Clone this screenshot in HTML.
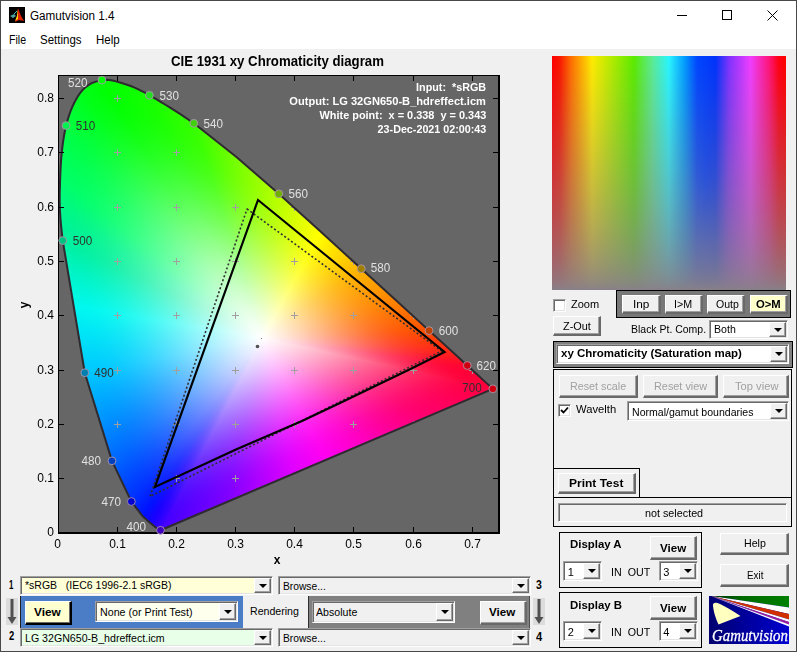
<!DOCTYPE html>
<html><head><meta charset="utf-8">
<style>
*{box-sizing:border-box;margin:0;padding:0}
html,body{width:797px;height:652px;overflow:hidden;background:#f0f0f0;font-family:"Liberation Sans",sans-serif;font-size:11px;color:#000}
#win{position:absolute;left:0;top:0;width:797px;height:652px;border:1px solid #5c5c5c;background:#f0f0f0;overflow:hidden}
.abs{position:absolute}
#titlebar{position:absolute;left:0;top:0;width:795px;height:30px;background:#fff}
#menubar{position:absolute;left:0;top:30px;width:795px;height:18px;background:#fff}
.t{position:absolute;white-space:nowrap;line-height:1}
canvas{position:absolute}
.btn{position:absolute;background:#f0f0f0;border-style:solid;border-width:1px 2px 2px 1px;border-color:#fff #696969 #696969 #fff;box-shadow:inset -1px -1px #a0a0a0;text-align:center;white-space:nowrap;font-size:12px;line-height:1}
.btn span{position:absolute;left:0;right:0}
.dd{position:absolute;background:#fff;border-style:solid;border-width:1px 1px 1px 1px;border-color:#a0a0a0 #fff #fff #a0a0a0;box-shadow:inset 1px 1px #696969,inset -1px -1px #e3e3e3;white-space:nowrap;font-size:12px;line-height:1;overflow:hidden}
.dd .v{position:absolute;left:4px}
.arr{position:absolute;top:1px;right:1px;bottom:1px;width:17px;background:#f0f0f0;border-style:solid;border-width:1px 1px 1px 1px;border-color:#fff #696969 #696969 #fff;box-shadow:inset -1px -1px #a0a0a0}
.arr:after{content:"";position:absolute;left:50%;top:50%;margin-left:-4px;margin-top:-2px;border-left:4px solid transparent;border-right:4px solid transparent;border-top:4px solid #000}
.frame{position:absolute;border:1px solid #000}
.chk{position:absolute;width:13px;height:13px;background:#fff;border:1px solid;border-color:#a0a0a0 #fff #fff #a0a0a0;box-shadow:inset 1px 1px #696969,inset -1px -1px #e3e3e3}
.tx{position:absolute;white-space:pre;line-height:1;transform-origin:0 0}
.lbl{position:absolute;white-space:nowrap;font-size:12px;line-height:1}
.b{font-weight:bold}

</style></head><body>
<div id="win">
 <div id="titlebar"></div>
 <div id="menubar"></div>
</div>
<canvas id="plot" width="560" height="520" style="left:0;top:50px"></canvas>
<canvas id="hue" width="234" height="234" style="left:552px;top:56px"></canvas>

<div id="ui">
 <svg class="abs" style="left:9px;top:7px" width="16" height="16" viewBox="0 0 16 16"><rect width="16" height="16" fill="#000"/><path d="M9 1L12 9L15 14L10 13L6 15L8 9Z" fill="#e02000"/><path d="M9 2L8 9L6 14L9 12Z" fill="#ffd000"/><path d="M1 9L5 7L7 9L4 11Z" fill="#50a0a0"/><path d="M5 7L8 4" stroke="#40c0c0" stroke-width="1"/></svg>
 <div class="abs" style="left:677px;top:15px;width:10px;height:1px;background:#000"></div>
 <div class="abs" style="left:722px;top:10px;width:10px;height:10px;border:1px solid #000"></div>
 <svg class="abs" style="left:767px;top:10px" width="11" height="11"><path d="M0.5 0.5L10.5 10.5M10.5 0.5L0.5 10.5" stroke="#000" stroke-width="1"/></svg>

 <!-- right panel -->
 <div class="chk" style="left:553px;top:299px"></div>
 <div class="btn" style="left:553px;top:316px;width:48px;height:20px"></div>
 <div class="abs" style="left:616px;top:290px;width:175px;height:28px;background:#787878;border:1px solid #000"></div>
 <div class="btn" style="left:622px;top:295px;width:39px;height:19px"></div>
 <div class="btn" style="left:665px;top:295px;width:38px;height:19px"></div>
 <div class="btn" style="left:707px;top:295px;width:38px;height:19px"></div>
 <div class="btn" style="left:750px;top:295px;width:38px;height:19px;background:#ffffcc"></div>
 <div class="dd" style="left:709px;top:320px;width:79px;height:19px"><div class="arr"></div></div>
 <div class="abs" style="left:553px;top:341px;width:240px;height:27px;background:#808080;border:1px solid #000"></div>
 <div class="dd" style="left:556px;top:344px;width:233px;height:20px"><div class="arr"></div></div>
 <div class="frame" style="left:553px;top:369px;width:239px;height:129px"></div>
 <div class="btn" style="left:559px;top:375px;width:79px;height:23px"></div>
 <div class="btn" style="left:643px;top:375px;width:75px;height:23px"></div>
 <div class="btn" style="left:723px;top:375px;width:66px;height:23px"></div>
 <div class="chk" style="left:558px;top:404px"></div>
 <svg class="abs" style="left:560px;top:406px" width="9" height="9"><path d="M1 4L3.5 6.5L8 1.5" stroke="#000" stroke-width="1.8" fill="none"/></svg>
 <div class="dd" style="left:627px;top:401px;width:162px;height:20px"><div class="arr"></div></div>
 <div class="frame" style="left:553px;top:468px;width:87px;height:30px"></div>
 <div class="btn" style="left:558px;top:473px;width:78px;height:21px"></div>
 <div class="frame" style="left:553px;top:497px;width:239px;height:30px"></div>
 <div class="abs" style="left:558px;top:503px;width:229px;height:19px;border:1px solid;border-color:#a0a0a0 #fff #fff #a0a0a0;box-shadow:inset 1px 1px #696969"></div>

 <div class="frame" style="left:559px;top:532px;width:143px;height:56px"></div>
 <div class="btn" style="left:650px;top:536px;width:47px;height:24px"></div>
 <div class="dd" style="left:563px;top:561px;width:39px;height:20px"><div class="arr"></div></div>
 <div class="dd" style="left:659px;top:561px;width:39px;height:20px"><div class="arr"></div></div>
 <div class="frame" style="left:559px;top:592px;width:143px;height:56px"></div>
 <div class="btn" style="left:650px;top:596px;width:47px;height:24px"></div>
 <div class="dd" style="left:563px;top:621px;width:39px;height:20px"><div class="arr"></div></div>
 <div class="dd" style="left:659px;top:621px;width:39px;height:20px"><div class="arr"></div></div>
 <div class="btn" style="left:720px;top:533px;width:69px;height:22px"></div>
 <div class="btn" style="left:720px;top:564px;width:69px;height:23px"></div>
 <svg class="abs" style="left:709px;top:596px" width="80" height="48" viewBox="0 0 80 48">
  <defs><linearGradient id="lg1" x1="0" y1="0" x2="1" y2="0"><stop offset="0" stop-color="#000070"/><stop offset="1" stop-color="#0000d0"/></linearGradient>
  <linearGradient id="lg2" x1="0" y1="0" x2="1" y2="0"><stop offset="0" stop-color="#003000"/><stop offset="0.4" stop-color="#006a00"/><stop offset="1" stop-color="#008000"/></linearGradient></defs>
  <rect width="80" height="48" fill="url(#lg1)"/>
  <path d="M2 0L80 0L80 11.5Z" fill="url(#lg2)"/>
  <path d="M2 0L80 11.5L80 18Z" fill="#fff"/>
  <path d="M2 0L80 18L80 23.5Z" fill="#d03000"/>
  <path d="M2 0L80 23.5L80 26Z" fill="#fff"/>
  <path d="M2 0L80 26L80 28.5Z" fill="#a020a0"/>
  <path d="M2 0L80 28.5L80 30.5Z" fill="#fff"/>
  <path d="M4 10Q3.5 6.5 7.5 6.8Q13 8 31.5 20L9.5 28.5Q5 19 4 10Z" fill="#ffffc0"/>
  <text x="3" y="44.5" textLength="76" lengthAdjust="spacingAndGlyphs" font-family="Liberation Serif" font-style="italic" font-size="17.5" fill="#fff" stroke="#fff" stroke-width="0.3">Gamutvision</text>
 </svg>

 <!-- bottom controls -->
 <div class="dd" style="left:20px;top:576px;width:253px;height:19px;background:#ffffd8"><div class="arr"></div></div>
 <div class="abs" style="left:6px;top:598px;width:12px;height:27px;background:#dcdcdc"></div>
 <svg class="abs" style="left:6px;top:598px" width="12" height="27"><rect x="4.5" y="1" width="3" height="20" fill="#505050"/><path d="M1.5 19L10.5 19L6 26Z" fill="#505050"/></svg>
 <div class="abs" style="left:20px;top:596px;width:223px;height:32px;background:#4b7cc6;border-left:1px solid #202020"></div>
 <div class="btn" style="left:25px;top:601px;width:47px;height:24px;background:#ffffd0;border-color:#fff #000 #000 #fff;box-shadow:inset -1px -1px #696969"></div>
 <div class="dd" style="left:95px;top:601px;width:143px;height:21px;background:#ffffee"><div class="arr"></div></div>
 <div class="abs" style="left:308px;top:596px;width:222px;height:32px;background:#808080;border-left:1px solid #303030;border-right:1px solid #505050"></div>
 <div class="dd" style="left:312px;top:601px;width:143px;height:22px;background:#f0f0f0"><div class="arr"></div></div>
 <div class="btn" style="left:480px;top:601px;width:47px;height:24px"></div>
 <div class="abs" style="left:533px;top:598px;width:12px;height:27px;background:#dcdcdc"></div>
 <svg class="abs" style="left:533px;top:598px" width="12" height="27"><rect x="4.5" y="1" width="3" height="20" fill="#505050"/><path d="M1.5 19L10.5 19L6 26Z" fill="#505050"/></svg>
 <div class="dd" style="left:20px;top:628px;width:253px;height:19px;background:#e8ffe8"><div class="arr"></div></div>
 <div class="dd" style="left:278px;top:576px;width:253px;height:19px;background:#f0f0f0"><div class="arr"></div></div>
 <div class="dd" style="left:278px;top:628px;width:253px;height:19px;background:#f0f0f0"><div class="arr"></div></div>
 <div id="texts"></div>
</div>
<script>
(function(){
var L=[[380,.1741,.0050],[385,.1740,.0050],[390,.1738,.0049],[395,.1736,.0049],[400,.1733,.0048],[405,.1730,.0048],[410,.1726,.0048],[415,.1721,.0048],[420,.1714,.0051],[425,.1703,.0058],[430,.1689,.0069],[435,.1669,.0086],[440,.1644,.0109],[445,.1611,.0138],[450,.1566,.0177],[455,.1510,.0227],[460,.1440,.0297],[465,.1355,.0399],[470,.1241,.0578],[475,.1096,.0868],[480,.0913,.1327],[485,.0687,.2007],[490,.0454,.2950],[495,.0235,.4127],[500,.0082,.5384],[505,.0039,.6548],[510,.0139,.7502],[515,.0389,.8120],[520,.0743,.8338],[525,.1142,.8262],[530,.1547,.8059],[535,.1929,.7816],[540,.2296,.7543],[545,.2658,.7243],[550,.3016,.6923],[555,.3373,.6589],[560,.3731,.6245],[565,.4087,.5896],[570,.4441,.5547],[575,.4788,.5202],[580,.5125,.4866],[585,.5448,.4544],[590,.5752,.4242],[595,.6029,.3965],[600,.6270,.3725],[605,.6482,.3514],[610,.6658,.3340],[615,.6801,.3197],[620,.6915,.3083],[625,.7006,.2993],[630,.7079,.2920],[635,.7140,.2859],[640,.7190,.2809],[645,.7230,.2770],[650,.7260,.2740],[655,.7283,.2717],[660,.7300,.2700],[665,.7311,.2689],[670,.7320,.2680],[675,.7327,.2673],[680,.7334,.2666],[685,.7340,.2660],[690,.7344,.2656],[695,.7346,.2654],[700,.7347,.2653]];
var OY=50;var WR=window.WRr||1,WG=window.WGr||1,WB=window.WBr||1;
function PX(x){return 57.9+x*592;}
function PY(y){return 532.9-y*543-OY;}
var c=document.getElementById('plot'),g=c.getContext('2d');
var W=c.width,H=c.height;
g.fillStyle='#f0f0f0';g.fillRect(0,0,W,H);
g.fillStyle='#666666';g.fillRect(58,75-OY,441,458);
// locus polyline
var WLS=[400,410,420,430,440,450,460,470,480,490,500,505,510,515,520,525,530,540,550,560,570,580,590,600,610,620,630,640,650,660,670,680,690,700];
var S0=[];WLS.forEach(function(wl){var p=L[(wl-380)/5];S0.push([PX(p[1]),PY(p[2]),wl]);});
var S=[];
for(var i=0;i<S0.length;i++){var p1=S0[i];
 if(i<S0.length-1&&p1[2]>=500&&p1[2]<540){var p0=S0[Math.max(0,i-1)],p2=S0[i+1],p3=S0[Math.min(S0.length-1,i+2)];
  for(var t=0;t<1;t+=0.1){var t2=t*t,t3=t2*t;
   S.push([0.5*((2*p1[0])+(-p0[0]+p2[0])*t+(2*p0[0]-5*p1[0]+4*p2[0]-p3[0])*t2+(-p0[0]+3*p1[0]-3*p2[0]+p3[0])*t3),
          0.5*((2*p1[1])+(-p0[1]+p2[1])*t+(2*p0[1]-5*p1[1]+4*p2[1]-p3[1])*t2+(-p0[1]+3*p1[1]-3*p2[1]+p3[1])*t3),p1[2]+t*(p2[2]-p1[2])]);}}
 else S.push(p1);}
function pathS(ctx){ctx.beginPath();for(var i=0;i<S.length;i++){if(i==0)ctx.moveTo(S[i][0],S[i][1]);else ctx.lineTo(S[i][0],S[i][1]);}ctx.closePath();}
var img=g.getImageData(0,0,W,H),d=img.data;
var off=document.createElement('canvas');off.width=W;off.height=H;var og=off.getContext('2d');
pathS(og);og.fillStyle='#000';og.fill();
var m=og.getImageData(0,0,W,H).data;
function gam(v){v=v<0?0:v;var GP=window.GAMP===undefined?1.4:window.GAMP;if(GP)return Math.pow(v,1/GP);return v<=0.0031308?12.92*v:1.055*Math.pow(v,1/2.4)-0.055;}
function colXY(x,y){if(y<=0.001)y=0.001;var X=x/y,Y=1,Z=(1-x-y)/y;
 var r=3.1338561*X-1.6168667*Y-0.4906146*Z,gg=-0.9787684*X+1.9161415*Y+0.0334540*Z,b=0.0719453*X-0.2289914*Y+1.4052427*Z;
 if(window.D65){r=3.2406*X-1.5372*Y-0.4986*Z;gg=-0.9689*X+1.8758*Y+0.0415*Z;b=0.0557*X-0.2040*Y+1.0570*Z;}
 if(r<0)r=0;if(gg<0)gg=0;if(b<0)b=0;var mx=Math.max(r,gg,b);return [255*gam(r/mx),255*gam(gg/mx),255*gam(b/mx)];}
function colPX(px,py){return colXY((px-57.9)/592,(532.9-(py+OY))/543);}
var MESH=window.MESH===undefined?2:window.MESH;
// mesh boundary vertices: locus + purple line samples
var BV=[];for(var i=0;i<S.length;i++){var p=S[i];BV.push([p[0],p[1],p[2]]);if(i<S.length-1){var p2=S[i+1];if(p2[2]-p[2]>=4.9){for(var q=1;q<4;q++){var t=q/4;BV.push([p[0]+(p2[0]-p[0])*t,p[1]+(p2[1]-p[1])*t,p[2]+(p2[2]-p[2])*t]);}}}}
var A0=BV[BV.length-1],A1=BV[0];for(var q=1;q<10;q++){BV.push([A0[0]+(A1[0]-A0[0])*q/10,A0[1]+(A1[1]-A0[1])*q/10,1000+q]);}
var ECOL=[[400,'4400ff'],[430,'3400ff'],[440,'2800ff'],[450,'1800ff'],[460,'0010ff'],[470,'0030ff'],[480,'0068ff'],[490,'00c8ff'],[495,'00f8f0'],[500,'00f0a0'],[505,'00ff68'],[510,'00ff40'],[515,'00ff18'],[520,'00ff00'],[530,'18ff00'],[540,'38ff00'],[550,'78ff00'],[560,'b8ff00'],[570,'ffff00'],[580,'ffb400'],[590,'ff8000'],[600,'ff5000'],[610,'ff2818'],[620,'ff0830'],[630,'ff0038'],[700,'ff0040'],
 [1000,'ff0040'],[1001,'ff0058'],[1002,'ff0070'],[1003,'ff0098'],[1004,'ff00c8'],[1005,'ff00f0'],[1006,'e000ff'],[1007,'b000ff'],[1008,'8000ff'],[1009,'6000ff'],[1010,'4400ff']];
if(window.ECOLX)ECOL=window.ECOLX;
function hx(h){return [parseInt(h.substr(0,2),16),parseInt(h.substr(2,2),16),parseInt(h.substr(4,2),16)];}
function ecol(wl){for(var i=1;i<ECOL.length;i++){if(wl<=ECOL[i][0]){var a=ECOL[i-1],b=ECOL[i],t=(wl-a[0])/(b[0]-a[0]);var ca=hx(a[1]),cb=hx(b[1]);return [ca[0]+(cb[0]-ca[0])*t,ca[1]+(cb[1]-ca[1])*t,ca[2]+(cb[2]-ca[2])*t];}}return hx(ECOL[ECOL.length-1][1]);}
var MAN=window.MAN===undefined?1:window.MAN;var KP=window.KP||1.8;
var CX=PX(window.CWX||0.3457),CY=PY(window.CWY||0.3585);
var NB=BV.length,ANG=[],VC=[];for(var i=0;i<NB;i++)BV[i][3]=ecol(BV[i][2]);
for(var i=0;i<NB;i++){ANG.push(Math.atan2(BV[i][1]-CY,BV[i][0]-CX));var row=[];
 for(var j=0;j<=MESH;j++){var f=j/MESH;var vx=CX+(BV[i][0]-CX)*f,vy=CY+(BV[i][1]-CY)*f;
  var ff=Math.max(0.0,f*0.985);row.push(colPX(CX+(BV[i][0]-CX)*ff,CY+(BV[i][1]-CY)*ff));}
 VC.push(row);}
function meshCol(px,py){var th=Math.atan2(py-CY,px-CX);
 for(var i=0;i<NB;i++){var i2=(i+1)%NB;var a1=ANG[i],a2=ANG[i2];var da=a2-a1;if(da<-Math.PI)da+=2*Math.PI;if(da>Math.PI)da-=2*Math.PI;
  var dt=th-a1;if(dt<-Math.PI)dt+=2*Math.PI;if(dt>Math.PI)dt-=2*Math.PI;
  if((da>=0&&dt>=0&&dt<=da)||(da<0&&dt<=0&&dt>=da)){
   var P1=BV[i],P2=BV[i2];var dx=px-CX,dy=py-CY;var ex=P2[0]-P1[0],ey=P2[1]-P1[1];
   var den=dx*ey-dy*ex;if(Math.abs(den)<1e-9)continue;
   var t=((P1[0]-CX)*ey-(P1[1]-CY)*ex)/den; // P = C + t*(d) hits chord when t
   var u=((P1[0]-CX)*dy-(P1[1]-CY)*dx)/den;
   var rho=1/t; if(rho>1)rho=1;if(rho<0)rho=0;if(u<0)u=0;if(u>1)u=1;
   if(MAN){var e1=BV[i][3],e2=BV[i2][3];var xs=Math.min(1,rho/(window.SR||0.95));var ff=(window.FMIX===undefined?0.5:window.FMIX)*(1-Math.pow(1-rho,KP))+(1-(window.FMIX===undefined?0.5:window.FMIX))*(xs*xs*(3-2*xs));var out=[0,0,0];for(var k=0;k<3;k++){var e=e1[k]*(1-u)+e2[k]*u;out[k]=255+(e-255)*ff;}return out;}
   var jf=rho*MESH,j=Math.floor(jf);if(j>=MESH)j=MESH-1;var v=jf-j;
   var c00=VC[i][j],c01=VC[i][j+1],c10=VC[i2][j],c11=VC[i2][j+1];var out=[0,0,0];
   for(var k=0;k<3;k++){out[k]=(c00[k]*(1-u)+c10[k]*u)*(1-v)+(c01[k]*(1-u)+c11[k]*u)*v;}
   return out;}}
 return colPX(px,py);}
for(var py=0;py<H;py++){for(var px=0;px<W;px++){var k=(py*W+px)*4;if(m[k+3]<8)continue;
 var col=MESH>0?meshCol(px+0.5,py+0.5):colPX(px+0.5,py+0.5);
 var a=m[k+3]/255;
 d[k]=d[k]*(1-a)+col[0]*a;d[k+1]=d[k+1]*(1-a)+col[1]*a;d[k+2]=d[k+2]*(1-a)+col[2]*a;}}
g.putImageData(img,0,0);
// grid crosses clipped to locus
g.save();pathS(g);g.clip();
g.strokeStyle='#a0a0a0';g.lineWidth=1;
for(var i=1;i<=7;i++)for(var j=1;j<=8;j++){var X=Math.floor(PX(i/10))+0.5,Y=Math.floor(PY(j/10))+0.5;g.beginPath();g.moveTo(X-3.5,Y);g.lineTo(X+3.5,Y);g.moveTo(X,Y-3.5);g.lineTo(X,Y+3.5);g.stroke();}
g.restore();
// locus outline
g.strokeStyle='#2e2a30';g.lineWidth=2;g.lineJoin='round';
pathS(g);g.stroke();
// frame
g.fillStyle='#000';g.fillRect(58,75-OY,442,1);g.fillRect(58,75-OY,1,459);g.fillRect(498,75-OY,2,459);g.fillRect(58,532-OY,442,2);
// ticks
g.beginPath();g.strokeStyle='#000';g.lineWidth=1;
for(var i=1;i<=7;i++){var X=Math.floor(PX(i/10))+0.5;g.moveTo(X,532-OY);g.lineTo(X,527-OY);g.moveTo(X,76-OY);g.lineTo(X,81-OY);}
for(var j=1;j<=8;j++){var Y=Math.floor(PY(j/10))+0.5;g.moveTo(59,Y);g.lineTo(64,Y);g.moveTo(498,Y);g.lineTo(493,Y);}
g.stroke();
g.textBaseline='alphabetic';
function FT(t,x,by,w,font,col){g.font=font;g.textAlign='left';g.fillStyle=col;var mt=g.measureText(t);var iw=mt.actualBoundingBoxRight+mt.actualBoundingBoxLeft;var sc=w?w/iw:1;
 g.save();g.translate(x+mt.actualBoundingBoxLeft*sc,by-OY);g.scale(sc,1);g.textAlign='left';g.fillText(t,0,0);g.restore();}
// tick labels
g.fillStyle='#000';g.font='12px "Liberation Sans"';
g.textAlign='center';
var xl=['0','0.1','0.2','0.3','0.4','0.5','0.6','0.7'];
for(var i=0;i<8;i++){g.fillText(xl[i],Math.floor(PX(i/10))+0.5,548-OY);}
g.textAlign='right';
var yl=['0','0.1','0.2','0.3','0.4','0.5','0.6','0.7','0.8'];
for(var j=0;j<9;j++){g.fillText(yl[j],54,Math.floor(PY(j/10))+4);}
g.font='bold 12px "Liberation Sans"';g.textAlign='center';g.fillText('x',277,564-OY);
g.save();g.translate(28,305-OY);g.rotate(-Math.PI/2);g.fillText('y',0,0);g.restore();
FT('CIE 1931 xy Chromaticity diagram',171,66,212.5,'bold 14px "Liberation Sans"','#000');
// triangles
g.strokeStyle='#303030';g.lineWidth=1.6;g.setLineDash([2,2.2]);
g.beginPath();g.moveTo(247,209-OY);g.lineTo(441.5,351-OY);g.lineTo(150,496.5-OY);g.closePath();g.stroke();
g.setLineDash([]);
g.strokeStyle='#000';g.lineWidth=2.2;g.lineJoin='miter';
g.beginPath();g.moveTo(258,200-OY);g.lineTo(444.5,352-OY);g.lineTo(412,368.3-OY);g.lineTo(340,403-OY);g.lineTo(302,421-OY);g.lineTo(236,449.5-OY);g.lineTo(155,487-OY);g.closePath();g.stroke();
// white point
g.fillStyle='#505050';g.beginPath();g.arc(257.5,346.5-OY,1.8,0,7);g.fill();
g.fillStyle='#808080';g.fillRect(261,338-OY,1,1);
// wavelength dots
var dots=[[520,'#00ff00',67.9,86.9,0],[530,'#20e020',159.4,100,0],[510,'#00f050',75.8,129.8,1],[540,'#40d010',203.4,128.3,0],[560,'#70b000',288.5,198.4,0],[500,'#00c080',72.7,245.3,1],[580,'#a08000',370.7,272.2,0],[600,'#c04000',438.7,334.8,0],[490,'#0080b0',94.3,376.5,1],[620,'#d00010',476.5,369.5,0],[700,'#d00010',462.2,391.9,1],[480,'#0040c0',81.5,464.8,0],[470,'#0000d0',101.4,505.6,0],[400,'#4000c0',126.4,530.5,0]];
for(var n=0;n<dots.length;n++){var w=dots[n][0],p=L[(w-380)/5];var X=PX(p[1]),Y=PY(p[2]);
 g.fillStyle=dots[n][1];g.strokeStyle='rgba(170,150,170,0.9)';g.lineWidth=1;g.beginPath();g.arc(X,Y,3.9,0,7);g.fill();g.stroke();
 FT(''+w,dots[n][2],dots[n][3],19.8,'12px "Liberation Sans"',dots[n][4]?'#303030':'#e0e0e0');
}
// info text
FT('Input:  *sRGB',416.1,91,70.1,'bold 11px "Liberation Sans"','#fff');
FT('Output: LG 32GN650-B_hdreffect.icm',289.3,105,196.9,'bold 11px "Liberation Sans"','#fff');
FT('White point:  x = 0.338  y = 0.343',319.5,119,166.7,'bold 11px "Liberation Sans"','#fff');
FT('23-Dec-2021 02:00:43',377.6,133,108.6,'bold 11px "Liberation Sans"','#fff');
})();
(function(){
var c=document.getElementById('hue'),g=c.getContext('2d');var W=234,H=234;
var img=g.createImageData(W,H),d=img.data;
var stops=window.HSTOPS||[[0,255,0,0],[0.03,250,20,0],[0.08,255,110,0],[0.17,255,235,0],[0.35,90,235,0],[0.43,90,235,150],[0.5,40,245,255],[0.57,0,150,255],[0.62,0,70,255],[0.70,0,50,250],[0.76,130,50,255],[0.85,240,60,255],[0.93,255,20,120],[0.97,255,0,20],[1,255,0,0]];
function hc(h){for(var i=1;i<stops.length;i++){if(h<=stops[i][0]){var a=stops[i-1],b=stops[i],t=(h-a[0])/(b[0]-a[0]);return [a[1]+(b[1]-a[1])*t,a[2]+(b[2]-a[2])*t,a[3]+(b[3]-a[3])*t];}}return [255,0,0];}
function lin(v){v/=255;return v<=0.04045?v/12.92:Math.pow((v+0.055)/1.055,2.4);}
function gm(v){v=v<0?0:v>1?1:v;return 255*(v<=0.0031308?12.92*v:1.055*Math.pow(v,1/2.4)-0.055);}
function f(t){return t>0.008856?Math.cbrt(t):7.787*t+16/116;}
function fi(t){return t>0.206893?t*t*t:(t-16/116)/7.787;}
function toLab(c){var r=lin(c[0]),gg=lin(c[1]),b=lin(c[2]);
 var X=(0.4124*r+0.3576*gg+0.1805*b)/0.9505,Y=0.2126*r+0.7152*gg+0.0722*b,Z=(0.0193*r+0.1192*gg+0.9505*b)/1.089;
 var fx=f(X),fy=f(Y),fz=f(Z);return [116*fy-16,500*(fx-fy),200*(fy-fz)];}
function fromLab(l){var fy=(l[0]+16)/116,fx=fy+l[1]/500,fz=fy-l[2]/200;var X=fi(fx)*0.9505,Y=fi(fy),Z=fi(fz)*1.089;
 var r=3.2406*X-1.5372*Y-0.4986*Z,gg=-0.9689*X+1.8758*Y+0.0415*Z,b=0.0557*X-0.2040*Y+1.0570*Z;return [gm(r),gm(gg),gm(b)];}
var gray=toLab(window.HGRAY||[136,128,136]);
var tops=[],topc=[];for(var x=0;x<W;x++){topc.push(hc(x/(W-1)));tops.push(0);}var grayc=window.HGRAY||[136,128,136];
var P=window.HPOW||0.7;
for(var y=0;y<H;y++){for(var x=0;x<W;x++){var hh=x/(W-1);var bw=Math.max(0,1-Math.abs(hh-0.66)/0.08);var s=Math.pow(1-y/(H-1),P-0.2*bw*(y<H*0.5?1:Math.max(0,1-(y-H*0.5)/(H*0.3))));var tl=tops[x];
 var tc=topc[x];var col=[grayc[0]+(tc[0]-grayc[0])*s,grayc[1]+(tc[1]-grayc[1])*s,grayc[2]+(tc[2]-grayc[2])*s];var k=(y*W+x)*4;
 d[k]=col[0];d[k+1]=col[1];d[k+2]=col[2];d[k+3]=255;}}
g.putImageData(img,0,0);
})();

(function(){
var T=[
// txt, x, baseline, width, size, bold, color
['Gamutvision 1.4',30.2,19.9,84.8,12,0],
['File',8.5,44.4,17.3,12,0],['Settings',40,44.4,41.6,12,0],['Help',96.3,44.4,24,12,0],
['Zoom',570.5,308.8,28,11,0],['Z-Out',562.6,330,27.8,11,0],
['Inp',634,308.8,15.2,11,0],['I>M',675.2,308.8,17,11,0],['Outp',715.6,308.8,22.7,11,0],['O>M',755.7,308.8,24.6,11,1],
['Black Pt. Comp.',630.7,333.7,75,11,0],['Both',713.6,333.7,21.7,11,0],
['xy Chromaticity (Saturation map)',560.8,357.5,181.3,11,1],
['Reset scale',570.4,390.1,56,11,0,'#a0a0a0'],['Reset view',653.5,390.1,53.2,11,0,'#a0a0a0'],['Top view',735.1,390.1,43.5,11,0,'#a0a0a0'],
['Wavelth',575.9,413.6,40,11,0],['Normal/gamut boundaries',631.6,416,122,11,0],
['Print Test',568.6,487.3,54.8,11,1],['not selected',644.5,517.3,58,11,0],
['Display A',569.7,548.7,52.1,11,1],['View',659.5,551.9,26.7,11,1],['1',567.8,576,0,11,0],['IN  OUT',611.5,576,38.5,11,0],['3',663.2,576,0,11,0],
['Display B',569.7,609,52.1,11,1],['View',659.5,612.2,26.7,11,1],['2',567.8,636.3,0,11,0],['IN  OUT',611.5,636.3,38.5,11,0],['4',663.2,636.3,0,11,0],
['Help',743.5,547.8,21.8,11,0],['Exit',746.6,579.5,16.3,11,0],
['1',9.1,588.8,4.6,12,1],['*sRGB   (IEC6 1996-2.1 sRGB)',24.6,589.7,145.8,11,0],['Browse...',282.6,590.1,42.7,11,0],['3',536.1,589.1,6.1,12,1],
['View',33.9,616.7,27.3,11,1],['None (or Print Test)',99.5,616.4,92,11,0],['Rendering',250.4,615.8,48.8,11,0],['Absolute',315.9,616.2,41.2,11,0],['View',489.4,616.6,26.7,11,1],
['2',9.1,640.6,5.5,12,1],['LG 32GN650-B_hdreffect.icm',24.6,642,139.5,11,0],['Browse...',282.6,641.9,42.7,11,0],['4',536.1,641.3,6.5,12,1]
];
var host=document.getElementById('texts');
var cv=document.createElement('canvas').getContext('2d');
T.forEach(function(t){
 var e=document.createElement('span');e.className='tx';e.textContent=t[0];
 var S=t[4];e.style.fontSize=S+'px';if(t[5])e.style.fontWeight='bold';if(t[6])e.style.color=t[6];
 host.appendChild(e);
 cv.font=(t[5]?'bold ':'')+S+'px "Liberation Sans"';
 var mt=cv.measureText(t[0]);
 var inkL=mt.actualBoundingBoxLeft, inkW=mt.actualBoundingBoxRight+mt.actualBoundingBoxLeft;
 var sc=t[3]?t[3]/inkW:1;
 e.style.left=(t[1]+inkL*sc)+'px';
 e.style.top=(t[2]-0.8465*S)+'px';
 e.style.transform='scaleX('+sc+')';
});
})();
</script>
<div class="abs" style="left:0;top:0;width:797px;height:652px;border:1px solid #4a4846;pointer-events:none"></div>
</body></html>
